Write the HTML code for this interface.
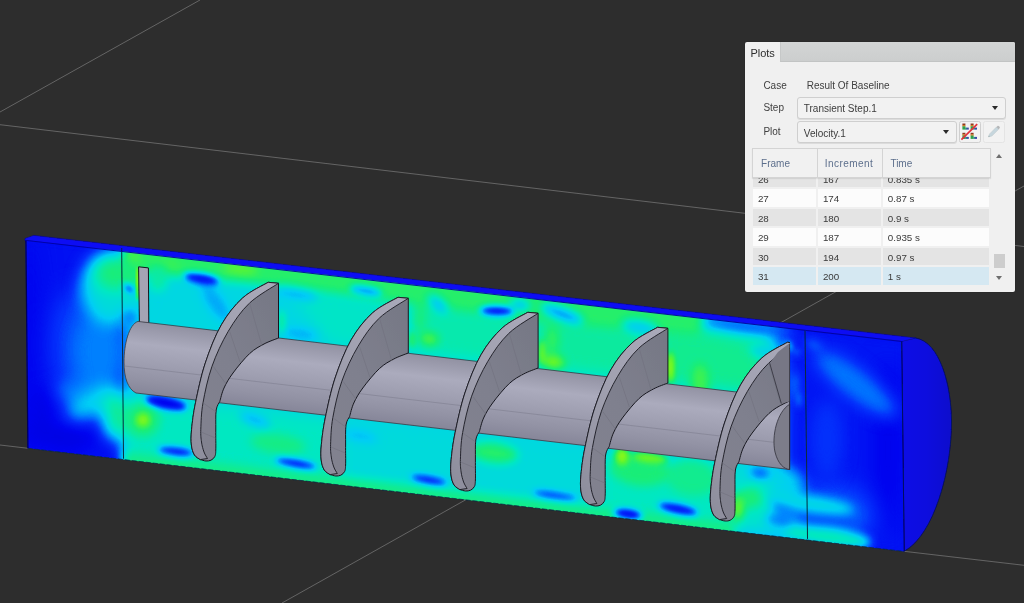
<!DOCTYPE html>
<html><head><meta charset="utf-8"><title>Plots</title>
<style>
html,body{margin:0;padding:0;background:#2d2d2d;}
body{width:1024px;height:603px;overflow:hidden;position:relative;font-family:"Liberation Sans",sans-serif;}
#scene{position:absolute;left:0;top:0;display:block}
#panel{position:absolute;left:744.5px;top:41.8px;width:270.2px;height:250.4px;background:#f0f0f0;border-radius:2px;color:#404040;font-size:10px;line-height:12px;box-shadow:0 0 1px rgba(0,0,0,.5);overflow:hidden}
#panel div,#panel span{position:absolute;white-space:nowrap}
#tabstrip{left:35.8px;top:0;right:0;height:20.4px;background:linear-gradient(#d3d5d5,#cccece);border-bottom:1px solid #c2c4c4;border-left:1px solid #c6c8c8;box-sizing:border-box}
#tab{left:5.9px;top:5.3px;font-size:11px;color:#2e2e2e}
.lbl{left:18.9px}
.dd{left:52.7px;height:22px;box-sizing:border-box;border:1px solid #cfcfcf;border-radius:3px;background:#f2f2f2;box-shadow:0 1px 0 #dcdcdc}
.dd span{left:5.6px;top:5px;color:#3c3c3c}
.arr{width:0;height:0;border-left:3.4px solid transparent;border-right:3.4px solid transparent;border-top:4.3px solid #2a2a2a}
.btn{top:79.2px;width:21.6px;height:22px;box-sizing:border-box;border:1px solid #cfcfcf;border-radius:2.5px;background:#f2f2f2}
#hdr{left:7.9px;top:106.6px;width:238.3px;height:29.9px;box-sizing:border-box;border:1px solid #d4d4d4;background:#f1f1f1;z-index:3;box-shadow:0 1px 1px rgba(0,0,0,.08)}
#hdr span{top:8.6px;color:#5d6f8c;font-size:10px}
#hdr i{position:absolute;top:0;bottom:0;width:1px;background:#d4d4d4}
.row{left:8.6px;width:236.4px;height:17.4px}
.row b{position:absolute;top:0;height:17.4px;font-weight:normal;display:block}
.row b span{left:4.8px;top:3.8px;color:#3a3a3a;font-size:9.8px}
.c1{left:0;width:62.7px}.c2{left:65px;width:62.7px}.c3{left:129.9px;width:106.5px}
.g b{background:#e4e4e4}.w b{background:#fcfcfc}.h b{background:#d5e8f2}

</style></head><body>
<svg id="scene" width="1024" height="603" viewBox="0 0 1024 603">
<defs>
<filter id="b12" x="-50%" y="-50%" width="200%" height="200%" color-interpolation-filters="sRGB"><feGaussianBlur stdDeviation="12"/></filter>
<filter id="b8" x="-50%" y="-50%" width="200%" height="200%" color-interpolation-filters="sRGB"><feGaussianBlur stdDeviation="8"/></filter>
<filter id="b5" x="-50%" y="-50%" width="200%" height="200%" color-interpolation-filters="sRGB"><feGaussianBlur stdDeviation="5"/></filter>
<filter id="b3" x="-50%" y="-50%" width="200%" height="200%" color-interpolation-filters="sRGB"><feGaussianBlur stdDeviation="3"/></filter>
<filter id="b2" x="-50%" y="-50%" width="200%" height="200%" color-interpolation-filters="sRGB"><feGaussianBlur stdDeviation="1.6"/></filter>
<filter id="soft" x="-5%" y="-5%" width="110%" height="110%"><feGaussianBlur stdDeviation="0.45"/></filter>
<filter id="cmap" x="0" y="0" width="100%" height="100%" color-interpolation-filters="sRGB"><feComponentTransfer><feFuncR type="table" tableValues="0.000 0.000 0.016 0.000 0.000 0.000 0.098 0.353 0.667 0.922 1.000"/><feFuncG type="table" tableValues="0.000 0.016 0.196 0.510 0.804 0.910 0.933 0.961 0.973 0.922 0.627"/><feFuncB type="table" tableValues="0.784 0.941 0.988 1.000 0.961 0.765 0.471 0.196 0.039 0.000 0.000"/></feComponentTransfer></filter>
<clipPath id="cut"><polygon points="25.6,240 901.7,341.2 904.2,551.4 27.6,448.2"/></clipPath>
<linearGradient id="shaft" gradientUnits="userSpaceOnUse" x1="400" y1="352" x2="391.6" y2="424">
<stop offset="0" stop-color="#9191a2"/>
<stop offset="0.3" stop-color="#ababbd"/>
<stop offset="0.55" stop-color="#9f9fb1"/>
<stop offset="0.8" stop-color="#9292a4"/>
<stop offset="1" stop-color="#858598"/>
</linearGradient>
<linearGradient id="face" x1="0.9" y1="0" x2="0.1" y2="1"><stop offset="0" stop-color="#767885"/><stop offset="0.5" stop-color="#7f808e"/><stop offset="1" stop-color="#82828f"/></linearGradient>
<linearGradient id="rim" x1="0.9" y1="0" x2="0.1" y2="1"><stop offset="0" stop-color="#a9a9b9"/><stop offset="0.5" stop-color="#a0a0af"/><stop offset="1" stop-color="#8e8e9d"/></linearGradient>
<linearGradient id="capg" gradientUnits="userSpaceOnUse" x1="902" y1="0" x2="952" y2="0">
<stop offset="0" stop-color="#0c10e6"/>
<stop offset="0.5" stop-color="#0a0cde"/>
<stop offset="1" stop-color="#0808cc"/>
</linearGradient>
</defs>
<rect width="1024" height="603" fill="#2d2d2d"/>
<g stroke="#646464" stroke-width="1" fill="none" filter="url(#soft)">
<line x1="0" y1="112" x2="200" y2="0"/>
<line x1="0" y1="124.7" x2="1024" y2="246.5"/>
<line x1="0" y1="445" x2="28" y2="448.3"/><line x1="904" y1="551.3" x2="1024" y2="565.3"/>
<line x1="282" y1="603" x2="1024" y2="186"/>
</g>
<g filter="url(#soft)">
<path d="M901.7,341.2 L915.5,338 C940,342 951,385 951.5,420 C952,470 934,535 904.2,551.2 Z" fill="url(#capg)" stroke="#050a60" stroke-width="0.8"/>
<polygon points="25,240.5 25,238.6 33.7,235.4 915.5,338 901.7,341.4" fill="#0c0cf4" stroke="#0606a8" stroke-width="0.6"/>
</g>
<g clip-path="url(#cut)"><g filter="url(#cmap)">
<rect x="0" y="200" width="1024" height="403" fill="rgb(26,26,26)"/>
<g filter="url(#b8)"><polygon points="20.0,230.0 123.0,240.0 125.0,470.0 20.0,460.0" fill="rgb(33,33,33)"/><polygon points="123.0,240.0 784.0,320.0 784.0,468.0 800.0,472.0 806.0,548.0 125.0,470.0" fill="rgb(112,112,112)"/><polygon points="784.0,320.0 910.0,335.0 910.0,560.0 806.0,548.0 800.0,472.0 784.0,468.0" fill="rgb(36,36,36)"/></g>
<g filter="url(#b12)"><ellipse cx="30.0" cy="340.0" rx="7" ry="110" fill="rgb(20,20,20)" transform="rotate(0 30.0 340.0)"/><ellipse cx="78.0" cy="345.0" rx="26" ry="55" fill="rgb(61,61,61)" transform="rotate(0 78.0 345.0)"/><ellipse cx="888.0" cy="450.0" rx="12" ry="90" fill="rgb(20,20,20)" transform="rotate(0 888.0 450.0)"/><ellipse cx="832.0" cy="512.0" rx="44" ry="26" fill="rgb(69,69,69)" transform="rotate(8 832.0 512.0)"/></g>
<g filter="url(#b8)"><polygon points="124.0,395.6 340.0,420.9 340.0,484.4 124.0,458.9" fill="rgb(128,128,128)"/><polygon points="340.0,420.9 600.0,451.3 600.0,515.1 340.0,484.4" fill="rgb(115,115,115)"/><polygon points="600.0,451.3 735.0,467.1 745.0,532.2 600.0,515.1" fill="rgb(128,128,128)"/><ellipse cx="100.0" cy="352.0" rx="26" ry="42" fill="rgb(76,76,76)" transform="rotate(0 100.0 352.0)"/><ellipse cx="113.0" cy="287.0" rx="33" ry="37" fill="rgb(115,115,115)" transform="rotate(0 113.0 287.0)"/><ellipse cx="116.0" cy="273.0" rx="22" ry="18" fill="rgb(153,153,153)" transform="rotate(0 116.0 273.0)"/><ellipse cx="95.0" cy="402.0" rx="30" ry="13" fill="rgb(107,107,107)" transform="rotate(-25 95.0 402.0)"/><ellipse cx="115.0" cy="416.0" rx="12" ry="24" fill="rgb(145,145,145)" transform="rotate(0 115.0 416.0)"/><ellipse cx="72.0" cy="390.0" rx="16" ry="10" fill="rgb(76,76,76)" transform="rotate(-10 72.0 390.0)"/><ellipse cx="62.0" cy="438.0" rx="40" ry="12" fill="rgb(18,18,18)" transform="rotate(8 62.0 438.0)"/><ellipse cx="42.0" cy="415.0" rx="10" ry="28" fill="rgb(20,20,20)" transform="rotate(0 42.0 415.0)"/><ellipse cx="100.0" cy="450.0" rx="18" ry="8" fill="rgb(31,31,31)" transform="rotate(8 100.0 450.0)"/><polygon points="284.0,283.9 400.0,297.3 400.0,352.3 330.0,344.1" fill="rgb(125,125,125)"/><polygon points="412.0,288.7 538.0,305.2 538.0,368.6 412.0,353.8" fill="rgb(135,135,135)"/><polygon points="540.0,305.4 668.0,320.2 668.0,384.0 540.0,368.9" fill="rgb(140,140,140)"/><polygon points="668.0,322.2 770.0,342.0 760.0,394.8 668.0,384.0" fill="rgb(145,145,145)"/><ellipse cx="783.0" cy="337.9" rx="10" ry="8" fill="rgb(51,51,51)" transform="rotate(6.6 783.0 337.9)"/><ellipse cx="757.0" cy="500.0" rx="14" ry="26" fill="rgb(128,128,128)" transform="rotate(0 757.0 500.0)"/><ellipse cx="785.0" cy="490.0" rx="16" ry="12" fill="rgb(107,107,107)" transform="rotate(0 785.0 490.0)"/><ellipse cx="856.0" cy="384.0" rx="52" ry="15" fill="rgb(74,74,74)" transform="rotate(38 856.0 384.0)"/><ellipse cx="827.0" cy="440.0" rx="16" ry="40" fill="rgb(51,51,51)" transform="rotate(0 827.0 440.0)"/></g>
<g filter="url(#b5)"><polygon points="124.0,241.4 705.0,308.5 700.0,335.9 560.0,323.7 420.0,305.6 300.0,288.7 124.0,271.4" fill="rgb(158,158,158)"/><polygon points="124.0,468.9 735.0,541.0 735.0,522.0 124.0,450.9" fill="rgb(148,148,148)"/><ellipse cx="131.0" cy="259.0" rx="8" ry="7" fill="rgb(184,184,184)" transform="rotate(6.6 131.0 259.0)"/><ellipse cx="240.0" cy="269.0" rx="18" ry="4.5" fill="rgb(184,184,184)" transform="rotate(6.6 240.0 269.0)"/><ellipse cx="165.0" cy="264.0" rx="16" ry="5" fill="rgb(168,168,168)" transform="rotate(6.6 165.0 264.0)"/><ellipse cx="130.0" cy="274.0" rx="7" ry="18" fill="rgb(153,153,153)" transform="rotate(0 130.0 274.0)"/><ellipse cx="158.0" cy="278.0" rx="10" ry="14" fill="rgb(138,138,138)" transform="rotate(0 158.0 278.0)"/><ellipse cx="130.0" cy="318.0" rx="7" ry="8" fill="rgb(76,76,76)" transform="rotate(0 130.0 318.0)"/><ellipse cx="216.0" cy="303.0" rx="8" ry="22" fill="rgb(89,89,89)" transform="rotate(-35 216.0 303.0)"/><ellipse cx="296.0" cy="293.0" rx="22" ry="4.5" fill="rgb(82,82,82)" transform="rotate(12 296.0 293.0)"/><ellipse cx="300.0" cy="334.0" rx="18" ry="4.5" fill="rgb(87,87,87)" transform="rotate(8 300.0 334.0)"/><ellipse cx="385.0" cy="330.0" rx="12" ry="14" fill="rgb(128,128,128)" transform="rotate(6.6 385.0 330.0)"/><ellipse cx="429.0" cy="339.0" rx="10" ry="6" fill="rgb(178,178,178)" transform="rotate(6.6 429.0 339.0)"/><ellipse cx="438.0" cy="304.0" rx="12" ry="4.5" fill="rgb(84,84,84)" transform="rotate(40 438.0 304.0)"/><ellipse cx="420.0" cy="318.0" rx="6" ry="14" fill="rgb(153,153,153)" transform="rotate(0 420.0 318.0)"/><ellipse cx="562.0" cy="314.0" rx="22" ry="5" fill="rgb(66,66,66)" transform="rotate(20 562.0 314.0)"/><ellipse cx="553.0" cy="362.0" rx="12" ry="6" fill="rgb(194,194,194)" transform="rotate(6.6 553.0 362.0)"/><ellipse cx="552.0" cy="340.0" rx="7" ry="14" fill="rgb(163,163,163)" transform="rotate(0 552.0 340.0)"/><ellipse cx="640.0" cy="327.0" rx="18" ry="6" fill="rgb(97,97,97)" transform="rotate(10 640.0 327.0)"/><ellipse cx="520.0" cy="305.0" rx="10" ry="4.5" fill="rgb(82,82,82)" transform="rotate(6.6 520.0 305.0)"/><ellipse cx="700.0" cy="385.0" rx="9" ry="22" fill="rgb(168,168,168)" transform="rotate(0 700.0 385.0)"/><ellipse cx="748.0" cy="327.6" rx="46" ry="4" fill="rgb(51,51,51)" transform="rotate(6.6 748.0 327.6)"/><ellipse cx="765.0" cy="352.0" rx="16" ry="5" fill="rgb(102,102,102)" transform="rotate(10 765.0 352.0)"/><ellipse cx="143.0" cy="420.0" rx="17" ry="17" fill="rgb(153,153,153)" transform="rotate(0 143.0 420.0)"/><ellipse cx="278.0" cy="444.0" rx="28" ry="10" fill="rgb(148,148,148)" transform="rotate(6.6 278.0 444.0)"/><ellipse cx="255.0" cy="420.0" rx="16" ry="5" fill="rgb(87,87,87)" transform="rotate(20 255.0 420.0)"/><ellipse cx="360.0" cy="436.0" rx="18" ry="4.5" fill="rgb(92,92,92)" transform="rotate(12 360.0 436.0)"/><ellipse cx="494.0" cy="453.0" rx="24" ry="10" fill="rgb(158,158,158)" transform="rotate(6.6 494.0 453.0)"/><ellipse cx="640.0" cy="470.0" rx="30" ry="16" fill="rgb(153,153,153)" transform="rotate(6.6 640.0 470.0)"/><ellipse cx="692.0" cy="478.0" rx="26" ry="18" fill="rgb(145,145,145)" transform="rotate(6.6 692.0 478.0)"/><ellipse cx="738.0" cy="507.0" rx="5" ry="14" fill="rgb(199,199,199)" transform="rotate(0 738.0 507.0)"/><ellipse cx="750.0" cy="498.0" rx="12" ry="10" fill="rgb(153,153,153)" transform="rotate(6.6 750.0 498.0)"/><ellipse cx="760.0" cy="473.0" rx="10" ry="4" fill="rgb(43,43,43)" transform="rotate(6.6 760.0 473.0)"/><ellipse cx="786.0" cy="507.0" rx="14" ry="4.5" fill="rgb(36,36,36)" transform="rotate(10 786.0 507.0)"/><ellipse cx="810.0" cy="504.0" rx="44" ry="8" fill="rgb(112,112,112)" transform="rotate(8 810.0 504.0)"/><ellipse cx="828.0" cy="537.0" rx="44" ry="9" fill="rgb(133,133,133)" transform="rotate(8 828.0 537.0)"/><ellipse cx="826.0" cy="520.0" rx="30" ry="3.5" fill="rgb(56,56,56)" transform="rotate(8 826.0 520.0)"/><ellipse cx="780.0" cy="520.0" rx="14" ry="4" fill="rgb(61,61,61)" transform="rotate(8 780.0 520.0)"/><ellipse cx="814.0" cy="345.0" rx="10" ry="5" fill="rgb(69,69,69)" transform="rotate(30 814.0 345.0)"/><ellipse cx="795.0" cy="385.0" rx="4" ry="14" fill="rgb(76,76,76)" transform="rotate(0 795.0 385.0)"/></g>
<g filter="url(#b3)"><ellipse cx="129.0" cy="288.5" rx="6" ry="3" fill="rgb(31,31,31)" transform="rotate(40 129.0 288.5)"/><ellipse cx="201.5" cy="279.0" rx="18" ry="5" fill="rgb(26,26,26)" transform="rotate(10 201.5 279.0)"/><ellipse cx="282.0" cy="322.0" rx="2.5" ry="12" fill="rgb(153,153,153)" transform="rotate(0 282.0 322.0)"/><ellipse cx="497.0" cy="311.0" rx="17" ry="4.5" fill="rgb(26,26,26)" transform="rotate(2 497.0 311.0)"/><ellipse cx="366.0" cy="291.0" rx="16" ry="4" fill="rgb(76,76,76)" transform="rotate(10 366.0 291.0)"/><ellipse cx="412.0" cy="340.0" rx="2" ry="9" fill="rgb(191,191,191)" transform="rotate(0 412.0 340.0)"/><ellipse cx="542.0" cy="352.0" rx="2.5" ry="12" fill="rgb(204,204,204)" transform="rotate(0 542.0 352.0)"/><ellipse cx="670.6" cy="368.0" rx="2.4" ry="16" fill="rgb(230,230,230)" transform="rotate(0 670.6 368.0)"/><ellipse cx="788.0" cy="346.0" rx="4" ry="3.5" fill="rgb(122,122,122)" transform="rotate(6.6 788.0 346.0)"/><ellipse cx="797.0" cy="352.0" rx="4" ry="3" fill="rgb(76,76,76)" transform="rotate(6.6 797.0 352.0)"/><ellipse cx="799.0" cy="400.0" rx="3" ry="8" fill="rgb(76,76,76)" transform="rotate(0 799.0 400.0)"/><ellipse cx="143.0" cy="420.0" rx="7" ry="7" fill="rgb(191,191,191)" transform="rotate(0 143.0 420.0)"/><ellipse cx="166.0" cy="403.0" rx="21" ry="6" fill="rgb(20,20,20)" transform="rotate(12 166.0 403.0)"/><ellipse cx="176.0" cy="451.5" rx="18" ry="4" fill="rgb(31,31,31)" transform="rotate(6.6 176.0 451.5)"/><ellipse cx="296.0" cy="463.5" rx="21" ry="3.5" fill="rgb(26,26,26)" transform="rotate(10 296.0 463.5)"/><ellipse cx="429.0" cy="480.0" rx="18" ry="3.2" fill="rgb(26,26,26)" transform="rotate(10 429.0 480.0)"/><ellipse cx="555.0" cy="495.6" rx="22" ry="3" fill="rgb(41,41,41)" transform="rotate(8 555.0 495.6)"/><ellipse cx="628.0" cy="514.0" rx="14" ry="4.5" fill="rgb(15,15,15)" transform="rotate(8 628.0 514.0)"/><ellipse cx="678.0" cy="509.0" rx="20" ry="4.5" fill="rgb(26,26,26)" transform="rotate(12 678.0 509.0)"/><ellipse cx="622.0" cy="456.0" rx="7" ry="9" fill="rgb(194,194,194)" transform="rotate(0 622.0 456.0)"/><ellipse cx="650.0" cy="458.0" rx="18" ry="4.5" fill="rgb(189,189,189)" transform="rotate(6.6 650.0 458.0)"/></g>
<g filter="url(#b2)"><ellipse cx="137.6" cy="284.0" rx="0.9" ry="17" fill="rgb(255,255,255)" transform="rotate(0 137.6 284.0)"/></g>
</g></g>
<g filter="url(#soft)">
<g stroke="#0a2a3c" stroke-width="1" fill="none"><line x1="121.7" y1="248" x2="123.5" y2="458.7"/><line x1="805" y1="330" x2="807.5" y2="538.9"/><line x1="901.7" y1="341.2" x2="904.2" y2="551.2" stroke="#050a60"/></g>
<line x1="25.9" y1="240" x2="27.9" y2="448.2" stroke="#04045c" stroke-width="1.3"/>
<line x1="25" y1="240.3" x2="901.7" y2="341.5" stroke="#0404a0" stroke-width="0.9"/>
<line x1="27.6" y1="448.3" x2="904.2" y2="551.5" stroke="#0c2c48" stroke-width="0.8" stroke-dasharray="5 2"/>
<polygon points="138.6,266.8 148.4,267.9 148.8,323.5 139.4,322.5" fill="#a4a4b4" stroke="#14141c" stroke-width="1"/>
<path d="M138,321.4 L789.6,398.3 L789.6,469.5 L136,393.0 C128,389.0 124,378 124,362 C124,344 129,324.4 138,321.4 Z" fill="url(#shaft)" stroke="#3a3a44" stroke-width="0.8"/>
<line x1="124.5" y1="366" x2="789" y2="444.1" stroke="#828294" stroke-width="0.7"/>
<path d="M789.6,404.3 C777,412 771.5,436 775,452 C778,464 784,469 789.6,469.5 Z" fill="#7d7d8a" stroke="#30303a" stroke-width="0.8"/>
<path d="M268.2,282.3 C263.9,284.9 250.4,290.9 242.6,298.0 C234.8,305.1 227.6,314.0 221.4,324.8 C215.2,335.6 209.6,350.0 205.3,363.0 C201.0,376.0 197.8,391.8 195.5,402.8 C193.2,413.9 192.3,422.3 191.6,429.3 C190.9,436.3 190.9,440.7 191.4,445.0 C191.9,449.3 193.0,452.6 194.5,455.0 C196.0,457.4 199.3,458.8 200.3,459.6 C201.2,459.8 204.2,460.9 206.0,461.0 C207.8,461.1 209.5,460.9 211.0,460.2 C212.5,459.4 214.0,458.2 214.8,456.5 C215.6,454.8 215.6,454.4 215.8,450.0 C216.0,445.6 215.7,436.7 215.8,430.0 C215.9,423.3 215.5,414.8 216.2,410.0 C216.9,405.2 219.2,402.9 219.8,401.5 C220.5,399.2 221.8,392.8 224.0,388.0 C226.2,383.2 228.7,378.8 233.0,373.0 C237.3,367.2 244.5,358.3 249.7,353.5 C254.9,348.7 259.2,346.6 264.0,344.0 C268.8,341.4 276.1,339.0 278.5,338.0 L278.5,283.3 Z" fill="url(#face)" stroke="#181820" stroke-width="1" stroke-linejoin="round"/><path d="M268.2,282.3 C263.9,284.9 250.4,290.9 242.6,298.0 C234.8,305.1 227.6,314.0 221.4,324.8 C215.2,335.6 209.6,350.0 205.3,363.0 C201.0,376.0 197.8,391.8 195.5,402.8 C193.2,413.9 192.3,422.3 191.6,429.3 C190.9,436.3 190.9,440.7 191.4,445.0 C191.9,449.3 193.0,452.6 194.5,455.0 C196.0,457.4 199.3,458.8 200.3,459.6 L207.5,458.5 C206.9,457.4 205.0,454.8 204.0,452.0 C203.0,449.2 202.0,445.8 201.5,442.0 C201.0,438.2 200.6,435.8 200.8,429.3 C201.1,422.8 201.1,413.3 203.0,402.8 C204.9,392.3 207.8,378.2 212.0,366.3 C216.2,354.4 222.0,341.9 228.2,331.4 C234.4,320.9 241.0,311.2 249.4,303.2 C257.8,295.2 273.6,286.6 278.5,283.3 Z" fill="url(#rim)" stroke="#181820" stroke-width="0.9" stroke-linejoin="round"/><line x1="249.7" y1="303.2" x2="262.0" y2="346.0" stroke="#70707d" stroke-width="0.6"/><line x1="229.7" y1="331.4" x2="240.0" y2="362.0" stroke="#70707d" stroke-width="0.6"/><line x1="213.2" y1="366.3" x2="226.0" y2="384.0" stroke="#70707d" stroke-width="0.6"/><line x1="203.0" y1="402.8" x2="216.0" y2="412.0" stroke="#70707d" stroke-width="0.6"/><line x1="201.0" y1="432.0" x2="215.5" y2="438.0" stroke="#70707d" stroke-width="0.6"/>
<path d="M398.0,297.3 C393.7,299.9 380.2,305.9 372.4,313.0 C364.6,320.1 357.4,329.0 351.2,339.8 C345.0,350.6 339.4,365.0 335.1,378.0 C330.8,391.0 327.6,406.8 325.3,417.8 C323.0,428.9 322.1,437.3 321.4,444.3 C320.7,451.3 320.7,455.7 321.2,460.0 C321.7,464.3 322.8,467.6 324.3,470.0 C325.8,472.4 329.1,473.8 330.1,474.6 C331.1,474.8 334.0,475.9 335.8,476.0 C337.6,476.1 339.3,475.9 340.8,475.2 C342.3,474.4 343.8,473.2 344.6,471.5 C345.4,469.8 345.4,469.4 345.6,465.0 C345.8,460.6 345.5,451.7 345.6,445.0 C345.7,438.3 345.3,429.8 346.0,425.0 C346.7,420.2 349.0,417.9 349.6,416.5 C350.3,414.2 351.6,407.8 353.8,403.0 C356.0,398.2 358.5,393.8 362.8,388.0 C367.1,382.2 374.3,373.3 379.5,368.5 C384.7,363.7 389.0,361.6 393.8,359.0 C398.6,356.4 405.9,354.0 408.3,353.0 L408.3,298.3 Z" fill="url(#face)" stroke="#181820" stroke-width="1" stroke-linejoin="round"/><path d="M398.0,297.3 C393.7,299.9 380.2,305.9 372.4,313.0 C364.6,320.1 357.4,329.0 351.2,339.8 C345.0,350.6 339.4,365.0 335.1,378.0 C330.8,391.0 327.6,406.8 325.3,417.8 C323.0,428.9 322.1,437.3 321.4,444.3 C320.7,451.3 320.7,455.7 321.2,460.0 C321.7,464.3 322.8,467.6 324.3,470.0 C325.8,472.4 329.1,473.8 330.1,474.6 L337.3,473.5 C336.7,472.4 334.8,469.8 333.8,467.0 C332.8,464.2 331.8,460.8 331.3,457.0 C330.8,453.2 330.4,450.8 330.6,444.3 C330.9,437.8 330.9,428.3 332.8,417.8 C334.7,407.3 337.6,393.2 341.8,381.3 C346.0,369.4 351.8,356.9 358.0,346.4 C364.2,335.9 370.8,326.2 379.2,318.2 C387.6,310.2 403.5,301.6 408.3,298.3 Z" fill="url(#rim)" stroke="#181820" stroke-width="0.9" stroke-linejoin="round"/><line x1="379.5" y1="318.2" x2="391.8" y2="361.0" stroke="#70707d" stroke-width="0.6"/><line x1="359.5" y1="346.4" x2="369.8" y2="377.0" stroke="#70707d" stroke-width="0.6"/><line x1="343.0" y1="381.3" x2="355.8" y2="399.0" stroke="#70707d" stroke-width="0.6"/><line x1="332.8" y1="417.8" x2="345.8" y2="427.0" stroke="#70707d" stroke-width="0.6"/><line x1="330.8" y1="447.0" x2="345.3" y2="453.0" stroke="#70707d" stroke-width="0.6"/>
<path d="M527.8,312.3 C523.5,314.9 510.0,320.9 502.2,328.0 C494.4,335.1 487.2,344.0 481.0,354.8 C474.8,365.6 469.2,380.0 464.9,393.0 C460.6,406.0 457.4,421.8 455.1,432.8 C452.8,443.9 451.9,452.3 451.2,459.3 C450.5,466.3 450.5,470.7 451.0,475.0 C451.5,479.3 452.6,482.6 454.1,485.0 C455.6,487.4 458.9,488.8 459.9,489.6 C460.9,489.8 463.8,490.9 465.6,491.0 C467.4,491.1 469.1,490.9 470.6,490.2 C472.1,489.4 473.6,488.2 474.4,486.5 C475.2,484.8 475.2,484.4 475.4,480.0 C475.6,475.6 475.3,466.7 475.4,460.0 C475.5,453.3 475.1,444.8 475.8,440.0 C476.5,435.2 478.8,432.9 479.4,431.5 C480.1,429.2 481.4,422.8 483.6,418.0 C485.8,413.2 488.3,408.8 492.6,403.0 C496.9,397.2 504.1,388.3 509.3,383.5 C514.5,378.7 518.8,376.6 523.6,374.0 C528.4,371.4 535.7,369.0 538.1,368.0 L538.1,313.3 Z" fill="url(#face)" stroke="#181820" stroke-width="1" stroke-linejoin="round"/><path d="M527.8,312.3 C523.5,314.9 510.0,320.9 502.2,328.0 C494.4,335.1 487.2,344.0 481.0,354.8 C474.8,365.6 469.2,380.0 464.9,393.0 C460.6,406.0 457.4,421.8 455.1,432.8 C452.8,443.9 451.9,452.3 451.2,459.3 C450.5,466.3 450.5,470.7 451.0,475.0 C451.5,479.3 452.6,482.6 454.1,485.0 C455.6,487.4 458.9,488.8 459.9,489.6 L467.1,488.5 C466.5,487.4 464.6,484.8 463.6,482.0 C462.6,479.2 461.6,475.8 461.1,472.0 C460.6,468.2 460.2,465.8 460.4,459.3 C460.7,452.8 460.7,443.3 462.6,432.8 C464.5,422.3 467.4,408.2 471.6,396.3 C475.8,384.4 481.6,371.9 487.8,361.4 C494.0,350.9 500.6,341.2 509.0,333.2 C517.4,325.2 533.2,316.6 538.1,313.3 Z" fill="url(#rim)" stroke="#181820" stroke-width="0.9" stroke-linejoin="round"/><line x1="509.3" y1="333.2" x2="521.6" y2="376.0" stroke="#70707d" stroke-width="0.6"/><line x1="489.3" y1="361.4" x2="499.6" y2="392.0" stroke="#70707d" stroke-width="0.6"/><line x1="472.8" y1="396.3" x2="485.6" y2="414.0" stroke="#70707d" stroke-width="0.6"/><line x1="462.6" y1="432.8" x2="475.6" y2="442.0" stroke="#70707d" stroke-width="0.6"/><line x1="460.6" y1="462.0" x2="475.1" y2="468.0" stroke="#70707d" stroke-width="0.6"/>
<path d="M657.6,327.3 C653.3,329.9 639.8,335.9 632.0,343.0 C624.2,350.1 617.0,359.0 610.8,369.8 C604.6,380.6 599.0,395.0 594.7,408.0 C590.4,421.0 587.2,436.8 584.9,447.8 C582.6,458.9 581.7,467.3 581.0,474.3 C580.3,481.3 580.3,485.7 580.8,490.0 C581.3,494.3 582.4,497.6 583.9,500.0 C585.4,502.4 588.7,503.8 589.7,504.6 C590.7,504.8 593.6,505.9 595.4,506.0 C597.2,506.1 598.9,505.9 600.4,505.2 C601.9,504.4 603.4,503.2 604.2,501.5 C605.0,499.8 605.0,499.4 605.2,495.0 C605.4,490.6 605.1,481.7 605.2,475.0 C605.3,468.3 604.9,459.8 605.6,455.0 C606.3,450.2 608.6,447.9 609.2,446.5 C609.9,444.2 611.2,437.8 613.4,433.0 C615.6,428.2 618.1,423.8 622.4,418.0 C626.7,412.2 633.9,403.3 639.1,398.5 C644.3,393.7 648.6,391.6 653.4,389.0 C658.2,386.4 665.5,384.0 667.9,383.0 L667.9,328.3 Z" fill="url(#face)" stroke="#181820" stroke-width="1" stroke-linejoin="round"/><path d="M657.6,327.3 C653.3,329.9 639.8,335.9 632.0,343.0 C624.2,350.1 617.0,359.0 610.8,369.8 C604.6,380.6 599.0,395.0 594.7,408.0 C590.4,421.0 587.2,436.8 584.9,447.8 C582.6,458.9 581.7,467.3 581.0,474.3 C580.3,481.3 580.3,485.7 580.8,490.0 C581.3,494.3 582.4,497.6 583.9,500.0 C585.4,502.4 588.7,503.8 589.7,504.6 L596.9,503.5 C596.3,502.4 594.4,499.8 593.4,497.0 C592.4,494.2 591.4,490.8 590.9,487.0 C590.4,483.2 590.0,480.8 590.2,474.3 C590.5,467.8 590.5,458.3 592.4,447.8 C594.3,437.3 597.2,423.2 601.4,411.3 C605.6,399.4 611.4,386.9 617.6,376.4 C623.8,365.9 630.4,356.2 638.8,348.2 C647.2,340.2 663.1,331.6 667.9,328.3 Z" fill="url(#rim)" stroke="#181820" stroke-width="0.9" stroke-linejoin="round"/><line x1="639.1" y1="348.2" x2="651.4" y2="391.0" stroke="#70707d" stroke-width="0.6"/><line x1="619.1" y1="376.4" x2="629.4" y2="407.0" stroke="#70707d" stroke-width="0.6"/><line x1="602.6" y1="411.3" x2="615.4" y2="429.0" stroke="#70707d" stroke-width="0.6"/><line x1="592.4" y1="447.8" x2="605.4" y2="457.0" stroke="#70707d" stroke-width="0.6"/><line x1="590.4" y1="477.0" x2="604.9" y2="483.0" stroke="#70707d" stroke-width="0.6"/>
<clipPath id="b5c"><rect x="0" y="0" width="789.9" height="603"/></clipPath><g clip-path="url(#b5c)"><path d="M787.4,342.3 C783.1,344.9 769.6,350.9 761.8,358.0 C754.0,365.1 746.8,374.0 740.6,384.8 C734.4,395.6 728.8,410.0 724.5,423.0 C720.2,436.0 717.0,451.8 714.7,462.8 C712.4,473.9 711.5,482.3 710.8,489.3 C710.1,496.3 710.1,500.7 710.6,505.0 C711.1,509.3 712.2,512.6 713.7,515.0 C715.2,517.4 718.5,518.8 719.5,519.6 C720.5,519.8 723.4,520.9 725.2,521.0 C727.0,521.1 728.7,521.0 730.2,520.2 C731.7,519.5 733.2,518.2 734.0,516.5 C734.8,514.8 734.8,514.4 735.0,510.0 C735.2,505.6 734.9,496.7 735.0,490.0 C735.1,483.3 734.7,474.8 735.4,470.0 C736.1,465.2 738.4,462.9 739.0,461.5 C739.7,459.2 741.0,452.8 743.2,448.0 C745.4,443.2 747.9,438.8 752.2,433.0 C756.5,427.2 763.7,418.3 768.9,413.5 C774.1,408.7 778.4,406.6 783.2,404.0 C788.0,401.4 795.3,399.0 797.7,398.0 L797.7,343.3 Z" fill="url(#face)" stroke="#181820" stroke-width="1" stroke-linejoin="round"/><path d="M787.4,342.3 C783.1,344.9 769.6,350.9 761.8,358.0 C754.0,365.1 746.8,374.0 740.6,384.8 C734.4,395.6 728.8,410.0 724.5,423.0 C720.2,436.0 717.0,451.8 714.7,462.8 C712.4,473.9 711.5,482.3 710.8,489.3 C710.1,496.3 710.1,500.7 710.6,505.0 C711.1,509.3 712.2,512.6 713.7,515.0 C715.2,517.4 718.5,518.8 719.5,519.6 L726.7,518.5 C726.1,517.4 724.2,514.8 723.2,512.0 C722.2,509.2 721.2,505.8 720.7,502.0 C720.2,498.2 719.8,495.8 720.0,489.3 C720.2,482.8 720.3,473.3 722.2,462.8 C724.1,452.3 727.0,438.2 731.2,426.3 C735.4,414.4 741.2,401.9 747.4,391.4 C753.6,380.9 760.2,371.2 768.6,363.2 C777.0,355.2 792.9,346.6 797.7,343.3 Z" fill="url(#rim)" stroke="#181820" stroke-width="0.9" stroke-linejoin="round"/><line x1="768.9" y1="363.2" x2="781.2" y2="406.0" stroke="#70707d" stroke-width="0.6"/><line x1="748.9" y1="391.4" x2="759.2" y2="422.0" stroke="#70707d" stroke-width="0.6"/><line x1="732.4" y1="426.3" x2="745.2" y2="444.0" stroke="#70707d" stroke-width="0.6"/><line x1="722.2" y1="462.8" x2="735.2" y2="472.0" stroke="#70707d" stroke-width="0.6"/><line x1="720.2" y1="492.0" x2="734.7" y2="498.0" stroke="#70707d" stroke-width="0.6"/></g>
<polygon points="788.4,344 789.6,344 789.6,401.5 781.3,403.5 769.7,363.2 778,352" fill="#777785"/>
<line x1="769.7" y1="363.2" x2="781.3" y2="403.5" stroke="#30303a" stroke-width="0.8"/>
<line x1="789.6" y1="343.5" x2="789.6" y2="469.5" stroke="#2e2e38" stroke-width="0.8"/>
</g>
</svg>
<div id="panel">
<div id="tabstrip"></div>
<div id="tab">Plots</div>
<div class="lbl" style="top:38.6px">Case</div>
<div style="left:62.2px;top:38.6px">Result Of Baseline</div>
<div class="lbl" style="top:60.5px">Step</div>
<div class="dd" style="top:55.4px;width:208.4px"><span>Transient Step.1</span><div class="arr" style="left:193.5px;top:7.8px"></div></div>
<div class="lbl" style="top:84.3px">Plot</div>
<div class="dd" style="top:79.3px;width:159.4px"><span style="top:5.6px">Velocity.1</span><div class="arr" style="left:145.2px;top:7.8px"></div></div>
<div class="btn" style="left:214.8px"><svg width="20" height="20" viewBox="0 0 20 20" style="position:absolute;left:0;top:0">
<g id="mk"><rect x="2.4" y="1.5" width="3" height="1.7" fill="#8c3a22"/><rect x="2.4" y="3" width="3" height="1.5" fill="#d07a20"/><rect x="2.4" y="4.3" width="3" height="3.3" fill="#2fa34a"/><rect x="5.2" y="5.6" width="1.8" height="2" fill="#2a8a8a"/><rect x="6.8" y="5.6" width="2" height="2" fill="#3a4aa8"/></g>
<use href="#mk" x="8.2" y="0"/><use href="#mk" x="0" y="9.3"/><use href="#mk" x="8.2" y="9.3"/>
<line x1="1.4" y1="17.7" x2="17.2" y2="2.1" stroke="#e2303c" stroke-width="1.7"/></svg></div>
<div class="btn" style="left:238.8px;width:21.8px;border-color:#e4e4e4"><svg width="20" height="20" viewBox="0 0 20 20" style="position:absolute;left:0;top:0">
<path d="M4.4,14.9 L5.6,11.9 L12.4,5.1 L14.6,7.3 L7.8,14.1 Z" fill="#c6d6dd" stroke="#b9c4c9" stroke-width="0.5"/><path d="M12.4,5.1 L13.6,3.9 C14.4,3.3 16.2,5 15.8,6.1 L14.6,7.3 Z" fill="#b4b6b8"/><path d="M4.4,14.9 L4.9,13.6 L5.8,14.4 Z" fill="#9aa"/></svg></div>
<div id="hdr"><span style="left:7.7px">Frame</span><i style="left:63.4px"></i><span style="left:71.4px;letter-spacing:0.45px">Increment</span><i style="left:128.4px"></i><span style="left:137px">Time</span></div>
<div class="row g" style="top:128.2px"><b class="c1"><span>26</span></b><b class="c2"><span>167</span></b><b class="c3"><span>0.835 s</span></b></div>
<div class="row w" style="top:147.7px"><b class="c1"><span>27</span></b><b class="c2"><span>174</span></b><b class="c3"><span>0.87 s</span></b></div>
<div class="row g" style="top:167.2px"><b class="c1"><span>28</span></b><b class="c2"><span>180</span></b><b class="c3"><span>0.9 s</span></b></div>
<div class="row w" style="top:186.7px"><b class="c1"><span>29</span></b><b class="c2"><span>187</span></b><b class="c3"><span>0.935 s</span></b></div>
<div class="row g" style="top:206.2px"><b class="c1"><span>30</span></b><b class="c2"><span>194</span></b><b class="c3"><span>0.97 s</span></b></div>
<div class="row h" style="top:225.7px"><b class="c1"><span>31</span></b><b class="c2"><span>200</span></b><b class="c3"><span>1 s</span></b></div>
<div class="arr" style="left:251.4px;top:112px;border-top:none;border-bottom:4.4px solid #6e6e6e;border-left-width:3.6px;border-right-width:3.6px"></div>
<div style="left:249px;top:212.1px;width:11.6px;height:14.5px;background:#cdcdcd"></div>
<div class="arr" style="left:251.6px;top:234.2px;border-top:4px solid #6e6e6e"></div>
</div>

</body></html>
